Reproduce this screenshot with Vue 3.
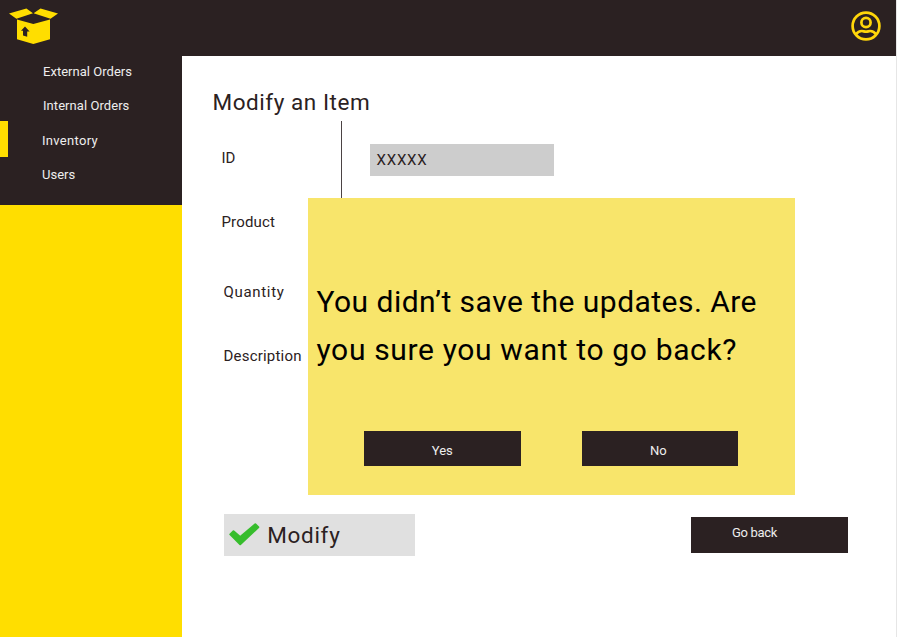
<script setup>
const links = [
  { label: 'External Orders', cls: 'external' },
  { label: 'Internal Orders', cls: 'internal' },
  { label: 'Inventory', cls: 'inventory', active: true },
  { label: 'Users', cls: 'users' },
]
</script>

<template>
  <div class="page">
    <header class="topbar">
      <svg class="logo" width="50" height="38" viewBox="0 0 50 38">
        <path d="M8 11.5 24.3 16 41 11.5V31.3L24.3 36 8 31.3Z" fill="#ffde00" />
        <path d="M0 5.6 17.4.6 24 5.2 7.4 10.8ZM49 5.6 31.5.6 24.6 5.2 41.5 10.8Z" fill="#ffde00" />
        <path d="M16 18.4 20.6 23.5H18.2V28.7L14 27.6V22.7H12Z" fill="#2b2122" />
      </svg>
      <svg class="avatar" width="30" height="30" viewBox="0 0 30 30" fill="none" stroke="#ffd60a" stroke-width="2.7">
        <circle cx="15" cy="15" r="13.4" />
        <circle cx="15" cy="11.5" r="4.6" />
        <path d="M5 23.400C6.400 21.200 8.600 20 10.800 20c1.600 0 2.400.7 4.200.7s2.600-.7 4.200-.7c2.200 0 4.400 1.200 5.800 3.400" />
      </svg>
    </header>
    <div class="body">
      <aside class="sidebar">
        <nav class="menu">
          <a v-for="l in links" :key="l.label" class="link" :class="[l.cls, { active: l.active }]"><span>{{ l.label }}</span></a>
        </nav>
      </aside>
      <main class="main">
        <h1 class="title"><span>Modify an Item</span></h1>
        <div class="form">
          <div class="labels">
            <label class="label id"><span>ID</span></label>
            <label class="label product"><span>Product</span></label>
            <label class="label quantity"><span>Quantity</span></label>
            <label class="label description"><span>Description</span></label>
          </div>
          <div class="rule"></div>
          <div class="field"><span>XXXXX</span></div>
        </div>
        <div class="actions">
          <button class="modify">
            <svg width="31" height="24" viewBox="0 0 31 24" fill="#37bd2d" stroke="#37bd2d" stroke-width="2" stroke-linejoin="round">
              <path d="M1.300 11.400 4.500 8.200 11.200 14 26.300 1.200 29.300 4.200 11.200 21.300Z" />
            </svg>
            <span>Modify</span>
          </button>
          <button class="dark back"><span>Go back</span></button>
        </div>
        <section class="dialog">
          <p class="message">
            <span class="line one">You didn’t save the updates. Are</span>
            <span class="line two">you sure you want to go back?</span>
          </p>
          <div class="choices">
            <button class="dark yes"><span>Yes</span></button>
            <button class="dark no"><span>No</span></button>
          </div>
        </section>
      </main>
    </div>
  </div>
</template>

<style>
body { margin: 0; background: #fff; }
</style>

<style scoped>
* { box-sizing: border-box; }
.page {
  width: 897px; height: 637px; overflow: hidden;
  border-right: 1px solid #e6e6e6;
  font-family: Roboto, "Noto Sans", sans-serif; color: #2b2122; background: #fff;
}
.topbar {
  height: 56px; background: #2b2122; display: flex;
  justify-content: space-between; align-items: flex-start; padding: 8px 15px 0 9px;
}
.avatar { margin-top: 3px; }
.body { display: flex; height: 581px; }
.sidebar { width: 181.500px; background: #ffde00; flex: none; }
.menu { height: 148.500px; background: #2b2122; display: flex; flex-direction: column; }
.link { display: flex; align-items: center; height: 34px; padding-left: 43px; font-size: 13px; color: #eee; white-space: nowrap; }
.external { height: 31px; letter-spacing: .03px; }
.internal { height: 34px; padding-top: 2px; letter-spacing: .06px; }
.inventory { height: 36px; border-left: 8.500px solid #ffde00; padding: 2px 0 0 34px; letter-spacing: .3px; }
.users { padding-left: 42px; }
.main { position: relative; flex: 1; padding-left: 31px; display: flex; flex-direction: column; }
.title { margin: 0; height: 64.500px; padding-top: 31px; font-size: 22.500px; font-weight: 400; line-height: 30px; letter-spacing: .55px; white-space: nowrap; }
.form { display: flex; height: 393px; }
.labels { width: 128px; padding-left: 9px; }
.label { display: flex; align-items: center; height: 30px; font-size: 15px; white-space: nowrap; }
.id { margin-top: 22px; }
.product { margin-top: 34.500px; letter-spacing: .15px; }
.quantity { margin-top: 40px; margin-left: 2px; letter-spacing: .68px; }
.description { margin-top: 34px; margin-left: 2px; letter-spacing: .2px; }
.rule { width: 1px; height: 150px; background: #4b4344; }
.field { margin: 23px 0 0 28px; width: 184px; height: 32.500px; background: #cdcdcd; display: flex; align-items: center; padding-left: 7px; font-size: 15px; letter-spacing: .8px; }
.actions { display: flex; justify-content: space-between; align-items: flex-start; padding: 0 48.500px 0 11.200px; }
button { border: 0; margin: 0; padding: 0; font-family: inherit; color: inherit; white-space: nowrap; }
.modify { width: 191px; height: 42.500px; background: #e0e0e0; display: flex; align-items: center; padding-left: 5px; gap: 7.500px; font-size: 22.500px; letter-spacing: .7px; }
.dark { width: 156.500px; height: 35.500px; background: #2b2122; color: #eee; font-size: 13px; line-height: 39px; }
.no { padding-right: 3px; }
.back { margin-top: 3.500px; line-height: 20px; text-align: left; padding: 0 0 4px 41px; letter-spacing: -.3px; }
.dialog { position: absolute; left: 126.500px; top: 142.300px; width: 487px; height: 296.500px; background: #f8e56b; color: #000; }
.message { margin: 0; padding: 79.600px 0 0 8.500px; font-size: 30px; line-height: 47.700px; }
.line { display: block; width: max-content; white-space: nowrap; }
.one { letter-spacing: .47px; }
.two { letter-spacing: .65px; }
.choices { display: flex; gap: 61px; padding: 57.600px 0 0 56px; }
</style>
